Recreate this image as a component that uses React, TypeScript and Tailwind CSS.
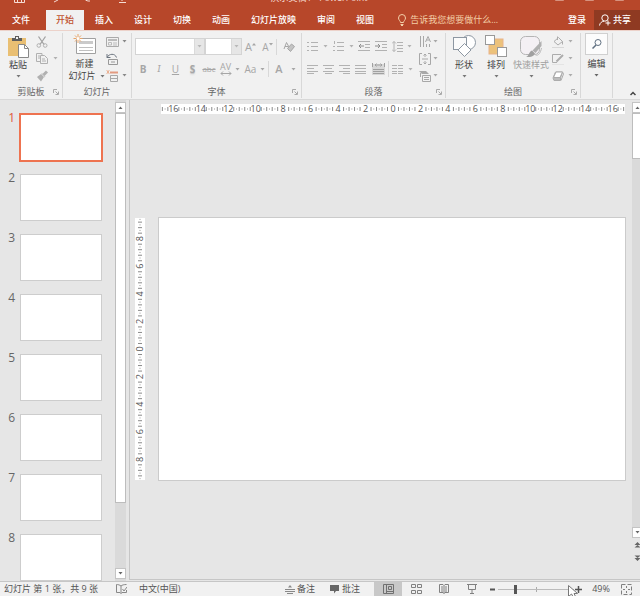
import type { ReactNode } from 'react'

import clsx from 'clsx'

const tabs = ['开始', '插入', '设计', '切换', '动画', '幻灯片放映', '审阅', '视图']
const slides = [1, 2, 3, 4, 5, 6, 7, 8]

interface IconProps {
  w?: number
  h?: number
  className?: string
  children: ReactNode
}

function Icon({ w = 12, h = 12, className, children }: IconProps) {
  return (
    <svg
      width={w}
      height={h}
      viewBox={`0 0 ${w} ${h}`}
      fill="none"
      stroke="currentColor"
      className={clsx('shrink-0', className)}
      aria-hidden="true"
    >
      {children}
    </svg>
  )
}

function Caret({ className }: { className?: string }) {
  return (
    <Icon w={5} h={3} className={className}>
      <path d="M0.5 0h4L2.5 2.5z" fill="currentColor" stroke="none" />
    </Icon>
  )
}

interface ButtonProps {
  label: string
  className?: string
  children: ReactNode
}

function Tool({ label, className, children }: ButtonProps) {
  return (
    <button
      type="button"
      aria-label={label}
      className={clsx('flex shrink-0 items-center justify-center', className)}
    >
      {children}
    </button>
  )
}

function Group(props: {
  label?: string
  launcher?: boolean
  className?: string
  children: ReactNode
}) {
  const { label, launcher, className, children } = props
  return (
    <section
      aria-label={label}
      className={clsx('flex shrink-0 flex-col pt-[2px]', className)}
    >
      <div className="flex flex-col border-r border-[#d8d8d8]">
        <div className="flex h-[53px]">{children}</div>
        <div className="flex h-3 items-center">
          <span className="flex-1 pl-3 text-center text-[#666]">{label}</span>
          <span className="flex w-3 justify-center">
            {launcher && (
              <button type="button" aria-label={`${label}设置`}>
                <Icon w={6} h={6} className="text-[#aaa]">
                  <path d="M0.5 4V0.5H4M2.500 2.500l2.500 2.500M5.500 2.500v3H2.500" />
                </Icon>
              </button>
            )}
          </span>
        </div>
      </div>
    </section>
  )
}

function BigButton(props: { text: string; className?: string; icon: ReactNode }) {
  return (
    <button
      type="button"
      className={clsx('flex shrink-0 flex-col items-center pt-[2px]', props.className)}
    >
      {props.icon}
      <span className="mt-px leading-3 whitespace-nowrap">{props.text}</span>
      <Caret className="mt-1 text-[#777]" />
    </button>
  )
}

function Divider() {
  return <span className="h-4 w-px shrink-0 bg-[#d8d8d8]" />
}

function TitleBar() {
  return (
    <div className="-mt-[9px] flex h-[19px] items-start text-[#f6dcd4]">
      <div className="flex flex-1 items-center gap-[24px] pl-[14px]">
        <Tool label="保存">
          <Icon w={11} h={12}>
            <path d="M0.5 0.5h10v11h-10zM3.5 11V8h4v3" />
          </Icon>
        </Tool>
        <Tool label="撤消">
          <Icon w={10} h={12}>
            <path d="M2 4h4a3 3 0 0 1 1 6L5 11" />
          </Icon>
        </Tool>
        <Tool label="恢复">
          <Icon w={10} h={12}>
            <path d="M8 4H5a3 3 0 0 0 0 6l2 0" />
          </Icon>
        </Tool>
        <Tool label="从头开始">
          <Icon w={10} h={12}>
            <path d="M1 2h8v5H1zM5 7v3M2 11.5h7" />
          </Icon>
        </Tool>
      </div>
      <h1 className="leading-[13px]">演示文稿1 - PowerPoint</h1>
      <div className="flex flex-1 items-center justify-end gap-[21px] pr-4 opacity-50">
        {['功能区显示选项', '最小化', '最大化'].map((name) => (
          <Tool key={name} label={name}>
            <Icon w={9} h={11}>
              <path d="M0.5 4.5h8v5h-8z" />
            </Icon>
          </Tool>
        ))}
      </div>
    </div>
  )
}

function TabBar() {
  return (
    <nav className="flex h-5 items-stretch font-medium text-white">
      <button type="button" className="w-[42px] shrink-0">
        文件
      </button>
      <div className="ml-1 flex shrink-0 gap-px">
        {tabs.map((t, i) => (
          <button
            key={t}
            type="button"
            className={clsx(
              'px-[10px] whitespace-nowrap',
              i === 0 && 'bg-[#f1f1f1] text-[#c0512f]',
            )}
          >
            {t}
          </button>
        ))}
      </div>
      <button
        type="button"
        className="ml-[14px] flex flex-1 items-center gap-1 font-normal whitespace-nowrap text-[#f3cfa8]"
      >
        <Icon w={8} h={12}>
          <path d="M2.5 8.5C2.5 7 0.5 6 0.5 4a3.5 3.5 0 0 1 7 0c0 2-2 3-2 4.500zM2.500 10.500h3M3 11.500h2" />
        </Icon>
        告诉我您想要做什么...
      </button>
      <button type="button" className="shrink-0 px-2">
        登录
      </button>
      <button
        type="button"
        className="flex shrink-0 items-center gap-[2px] bg-[#8f3a22] pr-[9px] pl-[5px]"
      >
        <Icon w={12} h={12} className="text-white">
          <circle cx="6" cy="4" r="3.200" />
          <path d="M0.500 11.500C1 8.500 3 7.500 5 7.200M9 6.500v5M6.500 9h5" />
        </Icon>
        共享
      </button>
    </nav>
  )
}

function Clipboard() {
  return (
    <Group label="剪贴板" launcher className="w-[63px]">
      <BigButton
        text="粘贴"
        className="w-[36px]"
        icon={
          <Icon w={22} h={23}>
            <rect x="1" y="3" width="18" height="18" fill="#e9bf73" stroke="none" />
            <path d="M5 6V3h3V1h4v2h3v3z" fill="#5d5d5d" stroke="none" />
            <rect x="9" y="2" width="2" height="2" fill="#f1f1f1" stroke="none" />
            <path d="M11.500 9.500h6l4 4v9h-10z" fill="#fff" stroke="#888" />
            <path d="M17.500 9.500v4h4" stroke="#888" />
          </Icon>
        }
      />
      <div className="flex flex-col text-[#b0b0b0]">
        <Tool label="剪切" className="h-[17px] w-3">
          <Icon>
            <path d="M2.500 0.500l5.500 8M9.500 0.500l-5.500 8" stroke="#a2a2a2" strokeWidth="1.300" />
            <circle cx="2.800" cy="9.500" r="1.800" />
            <circle cx="9.200" cy="9.500" r="1.800" />
          </Icon>
        </Tool>
        <Tool label="复制" className="h-[17px] gap-[5px]">
          <Icon>
            <path d="M6 2.500V0.500H0.500v8H4M2 3h2M2 5h2" />
            <path d="M4.500 2.500h4l3 3v5h-7zM6 6h3M6 8h4" />
          </Icon>
          <Caret />
        </Tool>
        <Tool label="格式刷" className="h-[17px] w-3">
          <Icon>
            <path d="M1 7l4-3 3 3-3 4.500z" fill="currentColor" stroke="none" />
            <path d="M5.500 3.500l3.500 3.500" stroke="#ccc" strokeWidth="1.500" />
            <path d="M7.500 5L11 1.500" strokeWidth="3" />
          </Icon>
        </Tool>
      </div>
    </Group>
  )
}

function Slides() {
  return (
    <Group label="幻灯片" className="w-[69px]">
      <button type="button" className="flex w-[43px] shrink-0 flex-col items-center pt-px">
        <Icon w={24} h={22}>
          <path d="M3.500 4.500h19v15h-19z" fill="#fff" stroke="#a0a0a0" />
          <path d="M6 8.500h14" stroke="#cacaca" strokeWidth="3" />
          <path d="M6 13.500h14M6 16.500h14" stroke="#c0c0c0" />
          <path d="M5 0v9M0.500 4.500h9M2 1.500l6 6M8 1.500l-6 6" stroke="#e8a468" />
          <circle cx="5" cy="4.500" r="1.500" fill="#fff" stroke="none" />
        </Icon>
        <span className="mt-[2px] leading-3">新建</span>
        <span className="flex items-center gap-1 pl-1 leading-3 whitespace-nowrap">
          幻灯片
          <Caret className="text-[#777]" />
        </span>
      </button>
      <div className="flex flex-col items-start text-[#888]">
        <Tool label="版式" className="h-[17px] gap-[3px]">
          <Icon w={13}>
            <path d="M0.500 1.500h12v9H0.500z" stroke="#aaa" />
            <path d="M2 4h9" strokeWidth="2" stroke="#bbb" />
            <path d="M2.500 6.500h3v2.500h-3zM7 7h4M7 9h4" stroke="#bbb" />
          </Icon>
          <Caret />
        </Tool>
        <Tool label="重置" className="h-[17px]">
          <Icon w={13}>
            <path d="M2.500 6.500h9v5h-9zM5 9h4" stroke="#999" />
            <path d="M1 4.500C3 0.500 9 0 10.500 4.500M1 1v3.500h3.500" stroke="#6c7580" />
          </Icon>
        </Tool>
        <Tool label="节" className="h-[17px] gap-[3px]">
          <Icon w={13}>
            <path d="M0.500 0.500l3 3M3.500 0.500l-3 3M2 0v4" stroke="#eab295" />
            <path d="M4 2.500h8" stroke="#e29a80" strokeWidth="2" />
            <path d="M4.500 5.500h7v6h-7zM5 8.500h6" stroke="#a8a8a8" />
          </Icon>
          <Caret />
        </Tool>
      </div>
    </Group>
  )
}

function Combo({ label, className }: { label: string; className: string }) {
  return (
    <div className={clsx('relative h-[17px] border border-[#d4d4d4] bg-white', className)}>
      <select aria-label={label} className="h-full w-full appearance-none" />
      <span className="pointer-events-none absolute inset-y-0 right-0 flex w-[10px] items-center justify-center border-l border-[#dadada] bg-[#e6e6e6] text-[#b8b8b8]">
        <Caret />
      </span>
    </div>
  )
}

function FontGroup() {
  return (
    <Group label="字体" launcher className="w-[170px]">
      <div className="flex flex-1 flex-col gap-[6px] pt-[5px] pl-[3px] text-[#a6a6a6]">
        <div className="flex items-center">
          <Combo label="字体" className="w-[70px]" />
          <Combo label="字号" className="w-[37px]" />
          <Tool label="增大字号" className="w-[17px] text-[11px]">
            A<Icon w={4} h={10}><path d="M0 3.500L2 1l2 2.500z" fill="currentColor" stroke="none" /></Icon>
          </Tool>
          <Tool label="减小字号" className="w-[17px] text-[10px]">
            A<Icon w={4} h={10}><path d="M0 1l2 2.500L4 1z" fill="currentColor" stroke="none" /></Icon>
          </Tool>
          <Divider />
          <Tool label="清除格式" className="w-6">
            <Icon>
              <path d="M1 8l2.500-6.500L6 6M2 5.500h3" />
              <path d="M4.500 7.500L8.500 3l3 2.500-4 5z" fill="#c4c4c4" />
            </Icon>
          </Tool>
        </div>
        <div className="flex h-4 items-center text-[10px]">
          <Tool label="加粗" className="w-4 font-bold">B</Tool>
          <Tool label="倾斜" className="w-4 font-serif italic">I</Tool>
          <Tool label="下划线" className="w-[17px] underline">U</Tool>
          <Tool label="文字阴影" className="w-[17px] font-bold text-shadow-sm">S</Tool>
          <Tool label="删除线" className="w-4 text-[8px] line-through">abc</Tool>
          <Tool label="字符间距" className="w-[25px] gap-[3px] text-[9px] leading-[8px]">
            <span className="flex flex-col items-center">
              AV
              <Icon w={12} h={5}>
                <path d="M1 2.500h10M3 0.500l-2 2 2 2M9 0.500l2 2-2 2" />
              </Icon>
            </span>
            <Caret />
          </Tool>
          <Tool label="更改大小写" className="w-[26px] gap-1">Aa<Caret /></Tool>
          <Divider />
          <Tool label="字体颜色" className="w-[33px] gap-2 text-[11px] font-semibold">A<Caret /></Tool>
        </div>
      </div>
    </Group>
  )
}

function Lines({ d }: { d: string }) {
  return (
    <Icon w={11} h={11}>
      <path d={d} />
    </Icon>
  )
}

function Paragraph() {
  return (
    <Group label="段落" launcher className="w-[144px]">
      <div className="flex flex-col gap-[7px] pt-[5px] pl-[2px] text-[#b2b2b2]">
        <div className="flex h-4 items-center">
          <Tool label="项目符号" className="w-[26px] gap-[5px]">
            <Lines d="M0 1.500h2M0 5.500h2M0 9.500h2M4 1.500h7M4 5.500h7M4 9.500h7" /><Caret />
          </Tool>
          <Tool label="编号" className="w-[26px] gap-[5px]">
            <Lines d="M1.500 0v3M0 5.500h2M0 9.500h2M4 1.500h7M4 5.500h7M4 9.500h7" /><Caret />
          </Tool>
          <Tool label="减少缩进" className="w-4">
            <Icon>
              <path d="M0 1.500h12M7 4.500h5M7 7.500h5M0 10.500h12" />
              <path d="M1 6h5M3 4L1 6l2 2" stroke="#8c8c8c" />
            </Icon>
          </Tool>
          <Tool label="增加缩进" className="w-[17px]">
            <Icon>
              <path d="M0 1.500h12M7 4.500h5M7 7.500h5M0 10.500h12" />
              <path d="M0 6h5M3 4l2 2-2 2" stroke="#8c8c8c" />
            </Icon>
          </Tool>
          <Tool label="行距" className="w-[26px] gap-1">
            <Lines d="M2 0.500v10M0 2.500l2-2 2 2M0 8.500l2 2 2-2M5 1.500h6M5 4.500h6M5 7.500h6M5 10.500h6" /><Caret />
          </Tool>
        </div>
        <div className="flex h-4 items-center">
          <Tool label="左对齐" className="w-4">
            <Lines d="M0 1.500h11M0 4.500h7M0 7.500h11M0 9.500h7" />
          </Tool>
          <Tool label="居中" className="w-4">
            <Lines d="M0 1.500h11M2 4.500h7M0 7.500h11M2 9.500h7" />
          </Tool>
          <Tool label="右对齐" className="w-4">
            <Lines d="M0 1.500h11M4 4.500h7M0 7.500h11M4 9.500h7" />
          </Tool>
          <Tool label="两端对齐" className="w-4">
            <Lines d="M0 1.500h11M0 4.500h11M0 7.500h11M0 9.500h11" />
          </Tool>
          <Tool label="分散对齐" className="w-5">
            <Icon w={13}>
              <path d="M0 1h13v11H0z" fill="#d8d8d8" stroke="none" />
              <path d="M0.500 0v4M12.500 0v4M3 2h7M4.500 0.500L3 2l1.500 1.500M8.500 0.500L10 2 8.500 3.500M1 6.500h11M1 8.500h11M1 10.500h11" stroke="#a0a0a0" />
            </Icon>
          </Tool>
          <Divider />
          <Tool label="分栏" className="w-[26px] gap-[5px]">
            <Lines d="M0 1.500h5M0 4.500h5M0 7.500h5M0 9.500h5M6 1.500h5M6 4.500h5M6 7.500h5M6 9.500h5" /><Caret />
          </Tool>
        </div>
      </div>
      <div className="flex flex-col pl-1 text-[#a8a8a8]">
        <Tool label="文字方向" className="h-[17px] gap-[2px]">
          <Icon>
            <path d="M1.500 0v11M4.500 0v11M6.500 6l2.500-5.500L11.500 6M7.500 4h3M7.500 8v3M10.500 8v3" />
          </Icon>
          <Caret />
        </Tool>
        <Tool label="对齐文本" className="h-[17px] gap-[2px]">
          <Icon>
            <path d="M3 0.500H0.500v11H3M9 0.500h2.500v11H9M3 6h6M6 1v3M6 8v3M4.500 2.500L6 1l1.500 1.500M4.500 9.500L6 11l1.500-1.500" />
          </Icon>
          <Caret />
        </Tool>
        <Tool label="转换为 SmartArt" className="h-[17px] gap-[2px]">
          <Icon>
            <path d="M0 1h7l3 3H3z" fill="currentColor" stroke="none" />
            <path d="M3.500 5.500h8v6h-8zM5 7.500h5M5 9.500h5M1.500 3v4" />
          </Icon>
          <Caret />
        </Tool>
      </div>
    </Group>
  )
}

function Drawing() {
  return (
    <Group label="绘图" launcher className="w-[135px]">
      <BigButton
        text="形状"
        className="w-9"
        icon={
          <Icon w={23} h={23} className="text-[#8d97a2]">
            <circle cx="15.500" cy="7.500" r="7" fill="#fff" />
            <rect x="0.500" y="2.500" width="13" height="12" fill="#fbfbfb" />
            <path d="M11.500 8.500l6.500 6.500-6.500 6.500L5 15z" fill="#fff" />
          </Icon>
        }
      />
      <BigButton
        text="排列"
        className="w-7"
        icon={
          <Icon w={22} h={23}>
            <rect x="4" y="4" width="14" height="15" fill="#ecc27b" stroke="#e9b48a" />
            <rect x="0.500" y="0.500" width="9" height="9" fill="#fff" stroke="#999" />
            <rect x="12.500" y="12.500" width="9" height="9" fill="#fff" stroke="#999" />
          </Icon>
        }
      />
      <BigButton
        text="快速样式"
        className="w-[42px] text-[#a0a0a0]"
        icon={
          <Icon w={23} h={23}>
            <rect x="0.500" y="1.500" width="19" height="18" rx="5" fill="#f4f0f4" stroke="#b4b4b4" />
            <path d="M21.500 6v5l-6 7-3-2.500z" fill="#b0b0b0" stroke="none" />
            <path d="M12 15.500l3 3c-2 4-6 3.500-9 3.500 3-1 3-5.500 6-6.500z" fill="#a0a0a0" stroke="none" />
            <path d="M21.500 13c-1 5-3 8-6 7" stroke="#bbb" />
          </Icon>
        }
      />
      <div className="flex flex-col text-[#acacac]">
        <Tool label="形状填充" className="h-[17px] gap-1">
          <Icon>
            <path d="M2 5.500L6.500 1.500l4 4L6 9zM5.500 4V0.500M10.500 5.500v3" />
            <path d="M0 11.500h12" stroke="#d8d8d8" />
          </Icon>
          <Caret />
        </Tool>
        <Tool label="形状轮廓" className="h-[17px] gap-1">
          <Icon>
            <path d="M9 1.500H0.500v8H5" />
            <path d="M4.500 8.500L11 2" strokeWidth="2" />
            <path d="M0 11.500h12" stroke="#e4e4e4" />
          </Icon>
          <Caret />
        </Tool>
        <Tool label="形状效果" className="h-[17px] gap-1">
          <Icon>
            <path d="M1 8l2.500-6h7L8.500 8v2.500H2z" fill="#bcbcbc" />
            <path d="M10.500 2l1 2-2.500 6.500" />
            <path d="M1.500 7.500L4 2h6.500L8 7.500z" fill="#fff" />
          </Icon>
          <Caret />
        </Tool>
      </div>
    </Group>
  )
}

function Ribbon() {
  return (
    <div className="flex h-[70px] shrink-0 border-t border-b border-t-[#ecd2ca] border-b-[#d8d8d8] bg-[#f1f1f1] text-[#444]">
      <Clipboard />
      <Slides />
      <FontGroup />
      <Paragraph />
      <Drawing />
      <Group className="w-8">
        <button type="button" className="flex flex-1 flex-col items-center">
          <span className="flex h-[22px] w-[23px] items-center justify-center border border-[#d0d0d0] bg-[#fcfcfc]">
            <Icon w={10} h={10} className="text-[#5f6f80]">
              <circle cx="6" cy="3.500" r="3" />
              <path d="M4 6L0.500 9.500" strokeWidth="1.500" />
            </Icon>
          </span>
          <span className="mt-[3px] leading-3">编辑</span>
          <Caret className="mt-1 text-[#666]" />
        </button>
      </Group>
      <div className="flex flex-1 items-end justify-end pr-1 pb-[3px]">
        <Tool label="折叠功能区">
          <Icon w={6} h={5}>
            <path d="M0.500 4L3 1.500 5.500 4" strokeWidth="1.500" />
          </Icon>
        </Tool>
      </div>
    </div>
  )
}

function Arrow({ up, label }: { up?: boolean; label: string }) {
  return (
    <Tool label={label} className="h-[11px] w-[11px] border border-[#c4c4c4] bg-white text-[#666]">
      <Caret className={clsx(up && 'rotate-180')} />
    </Tool>
  )
}

function ThumbnailPane() {
  return (
    <aside className="flex w-[126px] shrink-0">
      <ol className="flex flex-1 flex-col gap-[13px] overflow-hidden pt-[14px] pl-1">
        {slides.map((n) => (
          <li key={n} className="flex h-[47px] shrink-0 gap-[4px]">
            <span
              className={clsx(
                'w-3 pr-px text-right text-[12px] leading-[8px]',
                n === 1 ? 'text-[#e0593a]' : 'text-[#666]',
              )}
            >
              {n}
            </span>
            <button
              type="button"
              aria-label={`幻灯片 ${n}`}
              className={clsx(
                'h-full w-[82px] bg-white',
                n === 1
                  ? 'outline-2 -outline-offset-1 outline-[#ee7350]'
                  : 'border border-[#cdcdcd]',
              )}
            />
          </li>
        ))}
      </ol>
      <div className="flex w-[11px] flex-col bg-[#dadada] py-[2px]">
        <Arrow up label="向上滚动" />
        <div className="flex-6 border border-[#bdbdbd] bg-white" />
        <div className="flex-1" />
        <Arrow label="向下滚动" />
      </div>
    </aside>
  )
}

interface RulerProps {
  extent: number
  max: number
  vertical?: boolean
}

// five ticks to each labelled step of two, with a dot between neighbours
function Ruler({ extent, max, vertical }: RulerProps) {
  const marks = []
  const count = Math.floor(extent / 0.2)
  for (let i = -count; i <= count; i++) {
    const pos = `${((i * 0.2 + extent) / (2 * extent)) * 100}%`
    const value = Math.abs(i) / 5
    const nearLabel = Math.abs(i) % 10 === 1 || Math.abs(i) % 10 === 9
    let mark = null
    if (i % 10 === 0 && value <= max) {
      mark = (
        <text
          textAnchor="middle"
          y="3"
          fontSize="9"
          fill="#555"
          stroke="none"
          transform={vertical ? 'rotate(-90)' : undefined}
        >
          {value}
        </text>
      )
    } else if (i % 2 === 0) {
      mark = <path d={vertical ? 'M-2 0h4' : 'M0 -2v4'} stroke="#8a8a8a" />
    } else if (!nearLabel) {
      mark = <path d={vertical ? 'M-0.500 0h1' : 'M0 -0.500v1'} stroke="#999" />
    }
    marks.push(
      <svg key={i} x={vertical ? '50%' : pos} y={vertical ? pos : '50%'} overflow="visible">
        {mark}
      </svg>,
    )
  }
  return (
    <svg
      className={clsx(
        'block overflow-visible bg-white',
        vertical ? 'h-full w-[10px]' : 'h-[10px] w-full',
      )}
      aria-hidden="true"
    >
      {marks}
    </svg>
  )
}

function Editor() {
  return (
    <main className="mb-px ml-[3px] flex min-w-0 flex-1 border-b border-l border-[#c6c6c6]">
      <div className="flex min-w-0 flex-1 flex-col pt-1">
        <div className="pr-[7px] pl-[31px]">
          <Ruler extent={16.9} max={16} />
        </div>
        <div className="flex flex-1 flex-col justify-center pt-1">
          <div className="flex pr-[6px] pl-[5px]">
            <div className="relative mr-[13px] w-[10px]">
              <div className="absolute inset-x-0 inset-y-px">
                <Ruler extent={9.5} max={8} vertical />
              </div>
            </div>
            <div className="aspect-[39/22] flex-1 border border-[#cbcbcb] bg-white" />
          </div>
        </div>
      </div>
      <div className="flex w-2 shrink-0 flex-col overflow-hidden pt-[2px] pb-[18px]">
        <div className="flex w-[11px] flex-1 flex-col bg-[#dadada]">
          <Arrow up label="向上滚动" />
          <div className="h-[46px] border border-[#bdbdbd] bg-white" />
          <div className="flex-1" />
          <Arrow label="向下滚动" />
        </div>
        <div className="flex w-[11px] flex-col items-center gap-[7px] pt-1 text-[#666]">
          <Tool label="上一张幻灯片">
            <Icon w={7} h={6}>
              <path d="M0.500 3L3.500 0l3 3zM0.500 5.500L3.500 3l3 2.500z" fill="currentColor" stroke="none" />
            </Icon>
          </Tool>
          <Tool label="下一张幻灯片">
            <Icon w={7} h={6}>
              <path d="M0.500 0.500h6l-3 2.500zM0.500 3h6l-3 3z" fill="currentColor" stroke="none" />
            </Icon>
          </Tool>
        </div>
      </div>
    </main>
  )
}

function StatusBar() {
  return (
    <footer className="relative flex h-[15px] shrink-0 items-center border-t border-[#c6c6c6] bg-[#f1f1f1] pl-1 whitespace-nowrap text-[#555]">
      <span>幻灯片 第 1 张，共 9 张</span>
      <Tool label="拼写检查" className="ml-[18px] text-[#888]">
        <Icon w={11} h={10}>
          <path d="M5 9.500V2C4 1 2 0.500 0.500 0.500v8H4L5 9.500 6 8.500h4.500V6M5 2c1-1 3-1.500 5.500-1.500M6.500 5l1.500 2 3-4" />
        </Icon>
      </Tool>
      <span className="ml-3">中文(中国)</span>
      <div className="ml-auto flex h-full items-center">
        <button type="button" className="flex items-center gap-[2px]">
          <Icon w={10} h={10} className="text-[#888]">
            <path d="M0 5.500h10M0 7.500h10M2 9.500h6" />
            <path d="M3 3.500L5 1l2 2.500z" fill="currentColor" stroke="none" />
          </Icon>
          备注
        </button>
        <button type="button" className="ml-[15px] flex items-center gap-[3px]">
          <Icon w={9} h={10}>
            <path d="M0 1h9v6H6L4 9.500V7H0z" fill="#666" stroke="none" />
          </Icon>
          批注
        </button>
        <div className="ml-[14px] flex h-full text-[#808080]">
          <Tool label="普通视图" className="w-7 bg-[#c8c8c8]">
            <Icon w={11} h={10} className="text-[#707070]">
              <path d="M0.500 0.500h10v9H0.500zM3.500 1v8M4 7.500h6M5.500 2.500h3v3h-3z" />
            </Icon>
          </Tool>
          <Tool label="幻灯片浏览" className="w-7">
            <Icon w={11} h={10}>
              <path d="M0.500 0.500h4v3h-4zM6.500 0.500h4v3h-4zM0.500 6.500h4v3h-4zM6.500 6.500h4v3h-4z" />
            </Icon>
          </Tool>
          <Tool label="阅读视图" className="w-7">
            <Icon w={10} h={10}>
              <path d="M5 9.500V1.500L4 0.500H0.500v8H4l1 1 1-1h3.500v-8H6l-1 1M2 3h2M2 5h2M2 7h2M6 3h2M6 5h2M6 7h2" />
            </Icon>
          </Tool>
          <Tool label="幻灯片放映" className="w-7">
            <Icon w={10} h={10}>
              <path d="M0 0.500h10M1.500 1v4.500h7V1M5 6v3M3 9.500h4" />
            </Icon>
          </Tool>
        </div>
        <Tool label="缩小" className="w-3">
          <Icon w={5} h={5}>
            <path d="M0 2.500h5" strokeWidth="2" />
          </Icon>
        </Tool>
        <input
          type="range"
          aria-label="缩放"
          min="10"
          max="190"
          defaultValue="49"
          className="h-[9px] w-[76px] appearance-none bg-[linear-gradient(#bbb,#bbb),linear-gradient(#aaa,#aaa)] bg-[size:100%_1px,1px_5px] bg-center bg-no-repeat [&::-webkit-slider-thumb]:h-[9px] [&::-webkit-slider-thumb]:w-[3px] [&::-webkit-slider-thumb]:appearance-none [&::-webkit-slider-thumb]:bg-[#555]"
        />
        <Tool label="放大" className="w-[9px]">
          <Icon w={7} h={7}>
            <path d="M0 3.500h7M3.500 0v7" strokeWidth="1.500" />
          </Icon>
        </Tool>
        <button type="button" className="ml-2 w-5">
          49%
        </button>
        <Tool label="使幻灯片适应当前窗口" className="mr-2 ml-[10px] text-[#808080]">
          <Icon w={11} h={11}>
            <path d="M0.500 0.500h10v10H0.500z" strokeDasharray="4 2" />
            <path d="M5.500 2v2M5.500 7v2M2 5.500h2M7 5.500h2" />
          </Icon>
        </Tool>
      </div>
      {/* pointer resting over the zoom slider */}
      <svg
        width="10"
        height="12"
        viewBox="0 0 10 12"
        className="pointer-events-none absolute right-[62px] bottom-[-1px]"
        aria-hidden="true"
      >
        <path d="M0.500 0.500v11l3-2.500 2 3.500 2-1-1.500-3h3.500z" fill="#fff" stroke="#777" />
      </svg>
    </footer>
  )
}

export default function App() {
  return (
    <div className="flex h-screen flex-col overflow-hidden bg-[#e6e6e6] font-['Open_Sans','Noto_Sans_CJK_SC',sans-serif] text-[9px] leading-3">
      <header className="shrink-0 overflow-hidden bg-[#b7472a]">
        <TitleBar />
        <TabBar />
      </header>
      <Ribbon />
      <div className="flex min-h-0 flex-1">
        <ThumbnailPane />
        <Editor />
      </div>
      <StatusBar />
    </div>
  )
}
